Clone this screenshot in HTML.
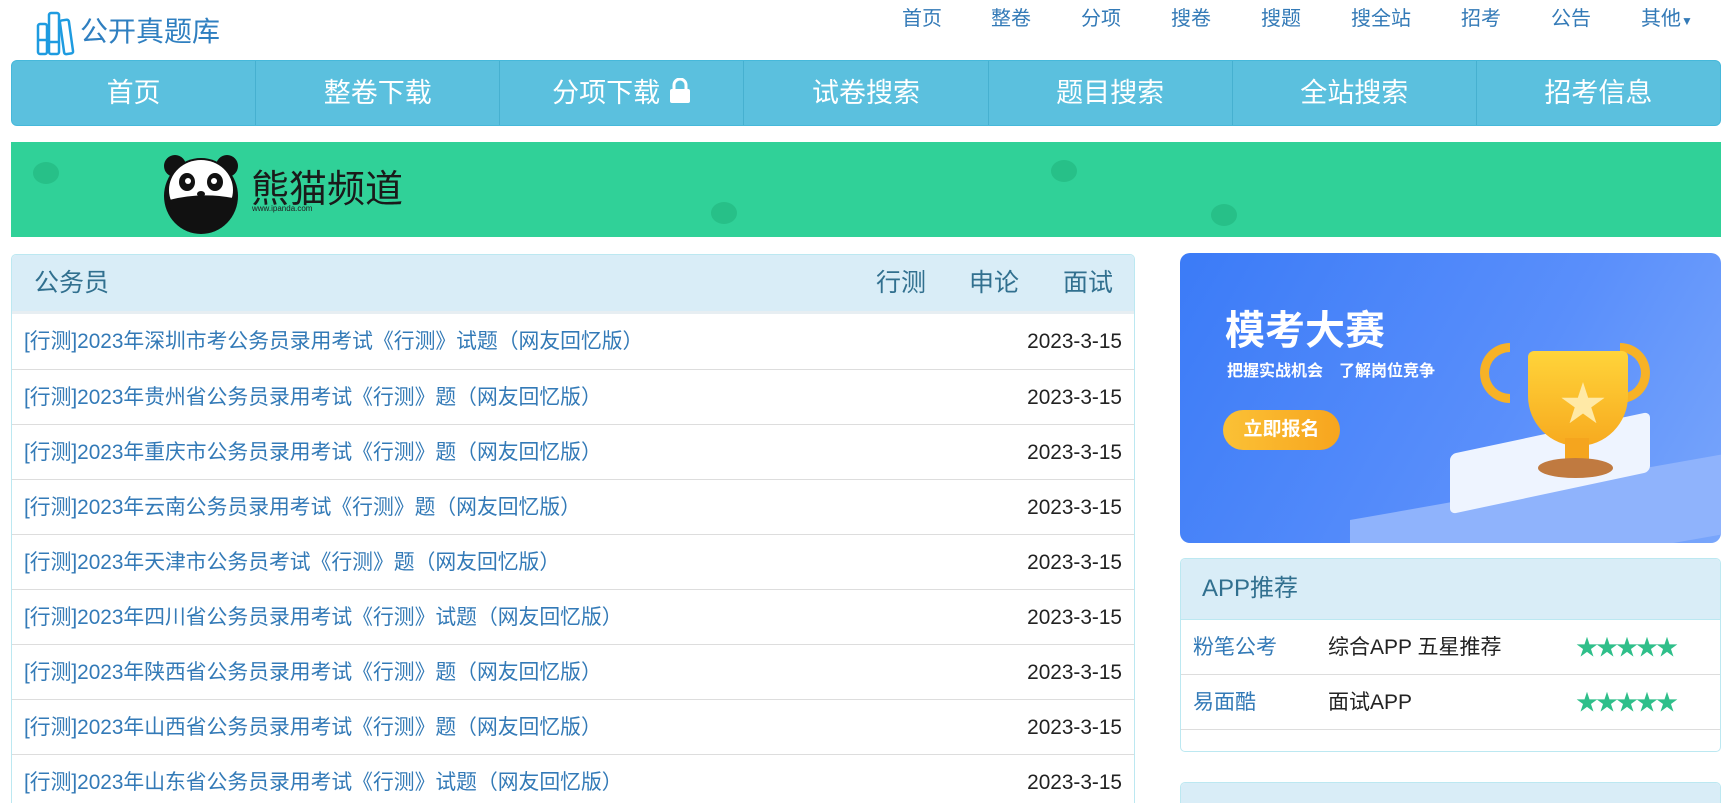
<!DOCTYPE html>
<html style="height:803px;overflow:hidden"><head><meta charset="utf-8"><style>
*{box-sizing:border-box;margin:0;padding:0}
body{width:1730px;height:803px;overflow:hidden;background:#fff;font-family:"Liberation Sans","Noto Sans CJK SC",sans-serif;position:relative}
.abs{position:absolute}
.top a{position:absolute;top:2px;font-size:20px;color:#337ab7;text-decoration:none}
.nav{left:11px;top:60px;width:1710px;height:66px;background:#5bc0de;border-radius:6px;display:flex;border:1px solid #46b8da}
.nav div{flex:1;color:#fff;font-size:27px;text-align:center;line-height:64px;border-right:1px solid #46b0d0}
.nav div:last-child{border-right:none}
.panel{border:1px solid #bce8f1;border-radius:5px;overflow:hidden}
.ph{background:#d9edf7;color:#31708f;font-size:24px}
.row{height:55px;border-top:1px solid #ddd;line-height:56px;font-size:20.8px;padding:0 12px;display:flex;justify-content:space-between}
.row a{color:#337ab7}
.row span{color:#222}
.star{color:#2fbf8a;font-size:22px;letter-spacing:-2px}
.paw{position:absolute;width:26px;height:22px;border-radius:50%;background:#27c088}
</style></head><body>
<div class="abs" style="left:36px;top:10px;width:44px;height:46px">
<svg width="44" height="46" viewBox="0 0 44 46"><g fill="none" stroke="#1e9be0" stroke-width="2.5"><rect x="2" y="14" width="9" height="30" rx="2"/><rect x="13" y="3" width="10" height="41" rx="2"/><rect x="26" y="10" width="9" height="34" rx="2" transform="rotate(-8 30 27)"/><line x1="2" y1="30" x2="11" y2="30"/><line x1="13" y1="32" x2="23" y2="32"/></g></svg></div>
<div class="abs" style="left:80px;top:10px;font-size:28px;color:#2f7fc0">公开真题库</div>
<div class="top">
<a style="left:902px">首页</a><a style="left:991px">整卷</a><a style="left:1081px">分项</a><a style="left:1171px">搜卷</a><a style="left:1261px">搜题</a><a style="left:1351px">搜全站</a><a style="left:1461px">招考</a><a style="left:1551px">公告</a><a style="left:1641px">其他<span style="font-size:12px">▼</span></a>
</div>
<div class="abs nav"><div>首页</div><div>整卷下载</div><div>分项下载 <svg width="24" height="26" viewBox="0 0 24 26" style="vertical-align:-2px"><path d="M6 11V7a6 6 0 0 1 12 0v4" fill="none" stroke="#fff" stroke-width="3"/><rect x="2" y="11" width="20" height="14" rx="2" fill="#fff"/></svg></div><div>试卷搜索</div><div>题目搜索</div><div>全站搜索</div><div>招考信息</div></div>
<div class="abs" style="left:11px;top:142px;width:1710px;height:95px;background:#30d198;overflow:hidden">
<div class="paw" style="left:22px;top:20px"></div><div class="paw" style="left:700px;top:60px"></div><div class="paw" style="left:1040px;top:18px"></div><div class="paw" style="left:1200px;top:62px"></div>
<svg class="abs" style="left:150px;top:10px" width="85" height="85" viewBox="0 0 85 85">
<circle cx="14" cy="14" r="11" fill="#111"/><circle cx="66" cy="14" r="11" fill="#111"/>
<ellipse cx="40" cy="44" rx="37" ry="38" fill="#111"/><ellipse cx="40" cy="38" rx="32" ry="30" fill="#fff"/>
<path d="M8 48 Q40 40 72 46 Q70 80 40 80 Q10 78 8 48Z" fill="#111"/>
<ellipse cx="26" cy="30" rx="8" ry="9" fill="#111"/><ellipse cx="54" cy="30" rx="8" ry="9" fill="#111"/>
<circle cx="27" cy="29" r="3" fill="#fff"/><circle cx="53" cy="29" r="3" fill="#fff"/><ellipse cx="40" cy="42" rx="4" ry="3" fill="#111"/></svg>
<div class="abs" style="left:240px;top:16px;font-size:38px;color:#1a1a1a">熊猫频道</div>
<div class="abs" style="left:241px;top:62px;font-size:8px;color:#222">www.ipanda.com</div>
</div>
<div class="abs panel" style="left:11px;top:254px;width:1124px;height:600px">
<div class="ph" style="height:59px;line-height:56px;padding-left:22px;position:relative;border-bottom:3px solid #e7eef2;font-size:25px">公务员
<span class="abs" style="left:864px">行测</span><span class="abs" style="left:957px">申论</span><span class="abs" style="left:1051px">面试</span></div>
<div class="row" style="border-top:none"><a>[行测]2023年深圳市考公务员录用考试《行测》试题（网友回忆版）</a><span>2023-3-15</span></div>
<div class="row"><a>[行测]2023年贵州省公务员录用考试《行测》题（网友回忆版）</a><span>2023-3-15</span></div>
<div class="row"><a>[行测]2023年重庆市公务员录用考试《行测》题（网友回忆版）</a><span>2023-3-15</span></div>
<div class="row"><a>[行测]2023年云南公务员录用考试《行测》题（网友回忆版）</a><span>2023-3-15</span></div>
<div class="row"><a>[行测]2023年天津市公务员考试《行测》题（网友回忆版）</a><span>2023-3-15</span></div>
<div class="row"><a>[行测]2023年四川省公务员录用考试《行测》试题（网友回忆版）</a><span>2023-3-15</span></div>
<div class="row"><a>[行测]2023年陕西省公务员录用考试《行测》题（网友回忆版）</a><span>2023-3-15</span></div>
<div class="row"><a>[行测]2023年山西省公务员录用考试《行测》题（网友回忆版）</a><span>2023-3-15</span></div>
<div class="row"><a>[行测]2023年山东省公务员录用考试《行测》试题（网友回忆版）</a><span>2023-3-15</span></div>
</div>
<div class="abs" style="left:1180px;top:253px;width:541px;height:290px;border-radius:10px;background:linear-gradient(120deg,#3b7bf7,#5a8ffb 60%,#79a6fb);overflow:hidden">
<div class="abs" style="left:45px;top:45px;font-size:40px;font-weight:bold;color:#fff">模考大赛</div>
<div class="abs" style="left:47px;top:104px;font-size:16px;font-weight:bold;color:#fff">把握实战机会　了解岗位竞争</div>
<div class="abs" style="left:43px;top:157px;width:117px;height:40px;border-radius:20px;background:linear-gradient(90deg,#fbc136,#f7a51e);color:#fff;font-size:19px;font-weight:bold;text-align:center;line-height:40px">立即报名</div>
<div class="abs" style="left:170px;top:230px;width:420px;height:80px;background:#8fb3fc;transform:skewY(-10deg)"></div>
<div class="abs" style="left:270px;top:180px;width:200px;height:60px;background:#eef4ff;transform:skewY(-12deg);border-radius:6px"></div>
<div class="abs" style="left:300px;top:90px;width:30px;height:60px;border:9px solid #f7b226;border-right:none;border-radius:30px 0 0 30px"></div>
<div class="abs" style="left:440px;top:90px;width:30px;height:60px;border:9px solid #f7b226;border-left:none;border-radius:0 30px 30px 0"></div>
<div class="abs" style="left:348px;top:98px;width:100px;height:95px;border-radius:6px 6px 50px 50px;background:linear-gradient(#ffd43a,#f7aa1f)"></div>
<div class="abs" style="left:385px;top:185px;width:24px;height:30px;background:#f5a51e"></div>
<div class="abs" style="left:358px;top:205px;width:75px;height:20px;border-radius:50%;background:#c07a40"></div>
<div class="abs" style="left:380px;top:115px;font-size:46px;color:#ffe9a6">★</div>
</div>
<div class="abs panel" style="left:1180px;top:558px;width:541px;height:194px">
<div class="ph" style="height:60px;line-height:60px;padding-left:21px">APP推荐</div>
<div class="row" style="height:55px;border-top:1px solid #bce8f1;font-size:21px"><a style="width:135px">粉笔公考</a><span style="flex:1">综合APP 五星推荐</span><b class="star" style="margin-right:32px">★★★★★</b></div>
<div class="row" style="height:55px;font-size:21px"><a style="width:135px">易面酷</a><span style="flex:1">面试APP</span><b class="star" style="margin-right:32px">★★★★★</b></div>
<div class="row" style="height:24px"></div>
</div>
<div class="abs panel" style="left:1180px;top:782px;width:541px;height:60px"><div class="ph" style="height:60px;padding:14px 21px">其他资料推荐</div></div>
</body></html>
